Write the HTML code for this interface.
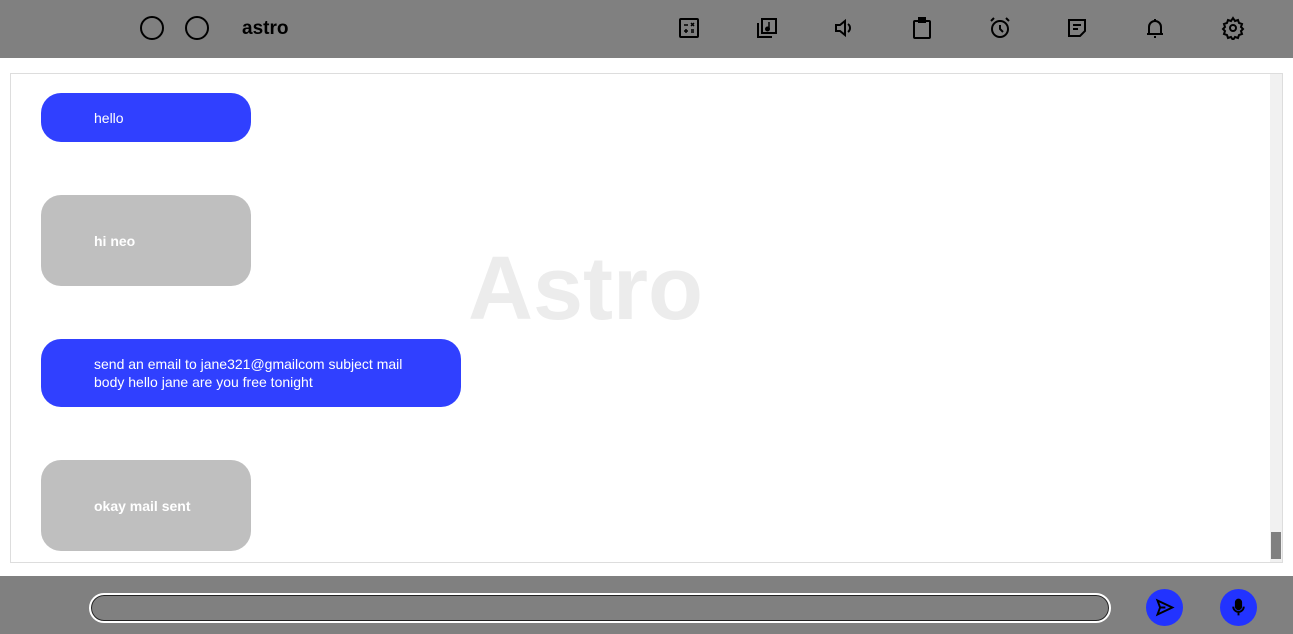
<!DOCTYPE html>
<html><head><style>
*{margin:0;padding:0;box-sizing:border-box}
body{width:1293px;height:634px;background:#fff;font-family:"Liberation Sans",sans-serif;position:relative;overflow:hidden}
.hdr{position:absolute;left:0;top:0;width:1293px;height:58px;background:#808080}
.circ{position:absolute;top:16px;width:24px;height:24px;border:2px solid #000;border-radius:50%}
.title{position:absolute;left:242px;top:18px;font-weight:bold;font-size:19px;color:#000}
.ic{position:absolute;top:16px;width:24px;height:24px}
.chat{position:absolute;left:10px;top:73px;width:1273px;height:490px;border:1px solid #ddd}
.sb{position:absolute;left:1270px;top:74px;width:12px;height:488px;background:#f1f1f1}
.th{position:absolute;left:1271px;top:532px;width:10px;height:27px;background:#808080}
.wm{position:absolute;left:468px;top:238px;font-size:90px;font-weight:bold;color:#ececec}
.b{position:absolute;left:41px;border-radius:20px;color:#fff;font-size:14px;padding-left:53px;display:flex;align-items:center;line-height:18px}
.blue{background:#3040ff}
.gray{background:#bfbfbf;font-weight:bold}
.ftr{position:absolute;left:0;top:576px;width:1293px;height:58px;background:#808080}
.inp{position:absolute;left:89px;top:593px;width:1022px;height:30px;border-radius:15px;border:2px solid #fff;box-shadow:inset 0 0 0 1px #222}
.btn{position:absolute;top:589px;width:37px;height:37px;border-radius:50%;background:#2233ff}
</style></head><body>
<div class="hdr">
<div class="circ" style="left:140px"></div>
<div class="circ" style="left:185px"></div>
<div class="title">astro</div>
<svg class="ic" style="left:677px" viewBox="0 0 24 24" fill="none" stroke="#000" stroke-width="2"><rect x="3" y="3" width="18" height="18" rx="1"/><path d="M7 9h4M14 7l3 3M17 7l-3 3M7 15h4M9 13v4M14 14h3M14 16h3" stroke-width="1.5"/></svg>
<svg class="ic" style="left:755px" viewBox="0 0 24 24" fill="none" stroke="#000" stroke-width="2"><rect x="7" y="3" width="14" height="14"/><path d="M3 7v14h14"/><path d="M14 6v7" stroke-width="1.5"/><circle cx="12.5" cy="13" r="1.5" fill="#000"/></svg>
<svg class="ic" style="left:832px" viewBox="0 0 24 24" fill="none" stroke="#000" stroke-width="2"><path d="M4 9v6h4l5 4V5L8 9z"/><path d="M16 8a5 5 0 010 8"/></svg>
<svg class="ic" style="left:910px" viewBox="0 0 24 24" fill="none" stroke="#000" stroke-width="2"><rect x="4" y="5" width="16" height="17" rx="1"/><rect x="9" y="2" width="6" height="4" fill="#000"/></svg>
<svg class="ic" style="left:988px" viewBox="0 0 24 24" fill="none" stroke="#000" stroke-width="2"><circle cx="12" cy="13" r="8"/><path d="M12 9v4l3 3M3 5l3-3M21 5l-3-3"/></svg>
<svg class="ic" style="left:1065px" viewBox="0 0 24 24" fill="none" stroke="#000" stroke-width="2"><path d="M4 4h16v11l-5 5H4z"/><path d="M8 9h8M8 13h5"/></svg>
<svg class="ic" style="left:1143px" viewBox="0 0 24 24" fill="none" stroke="#000" stroke-width="2"><path d="M6 18V11a6 6 0 0112 0v7M4 18h16"/><path d="M11 21h2M12 3v2"/></svg>
<svg class="ic" style="left:1221px" viewBox="0 0 24 24" fill="none" stroke="#000" stroke-width="2"><circle cx="12" cy="12" r="3"/><path d="M12 2l2 3 3-1 1 3 3 1-1 3 2 2-2 2 1 3-3 1-1 3-3-1-2 3-2-3-3 1-1-3-3-1 1-3-2-2 2-2-1-3 3-1 1-3 3 1z"/></svg>
</div>
<div class="chat"></div>
<div class="sb"></div><div class="th"></div>
<div class="wm">Astro</div>
<div class="b blue" style="top:93px;width:210px;height:49px">hello</div>
<div class="b gray" style="top:195px;width:210px;height:91px">hi neo</div>
<div class="b blue" style="top:339px;width:420px;height:68px">send an email to jane321@gmailcom subject mail<br>body hello jane are you free tonight</div>
<div class="b gray" style="top:460px;width:210px;height:91px">okay mail sent</div>
<div class="ftr"></div>
<div class="inp"></div>
<div class="btn" style="left:1146px"><svg style="position:absolute;left:8px;top:8px" width="21" height="21" viewBox="0 0 24 24" fill="none" stroke="#000" stroke-width="2.2"><path d="M4 4l17 8-17 8 3-8zM7 12h6"/></svg></div>
<div class="btn" style="left:1220px"><svg style="position:absolute;left:8px;top:8px" width="21" height="21" viewBox="0 0 24 24" fill="none" stroke="#000" stroke-width="2.2"><rect x="9" y="3" width="6" height="11" rx="3" fill="#000"/><path d="M6 11a6 6 0 0012 0M12 17v4"/></svg></div>
</body></html>
